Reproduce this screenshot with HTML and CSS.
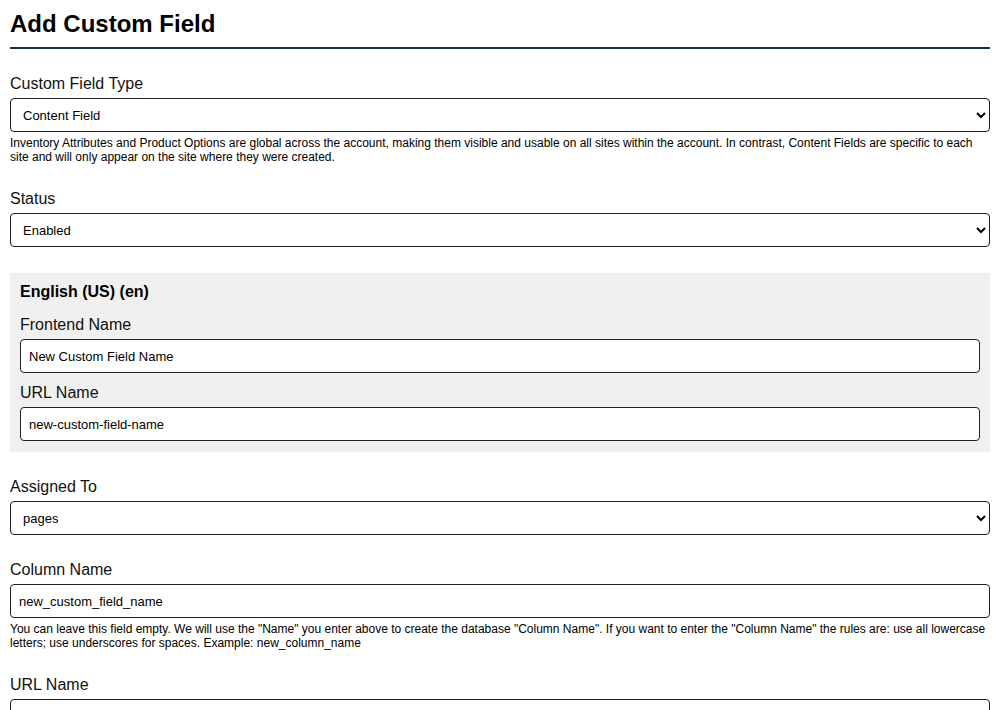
FILE: index.html
```html
<!DOCTYPE html>
<html lang="en">
<head>
<meta charset="utf-8">
<title>Add Custom Field</title>
<link rel="stylesheet" href="styles.css">
</head>
<body>
<div class="page">
  <h1 class="page-title">Add Custom Field</h1>
  <form class="form">
    <div class="group">
      <label class="label" for="type">Custom Field Type</label>
      <select class="control select" id="type">
        <option>Content Field</option>
        <option>Inventory Attribute</option>
        <option>Product Option</option>
      </select>
      <p class="help">Inventory Attributes and Product Options are global across the account, making them visible and usable on all sites within the account. In contrast, Content Fields are specific to each site and will only appear on the site where they were created.</p>
    </div>
    <div class="group">
      <label class="label" for="status">Status</label>
      <select class="control select" id="status">
        <option>Enabled</option>
        <option>Disabled</option>
      </select>
    </div>
    <div class="group lang-box">
      <div class="lang-title">English (US) (en)</div>
      <div class="inner-group">
        <label class="label" for="fname">Frontend Name</label>
        <input class="control" id="fname" type="text" value="New Custom Field Name">
      </div>
      <div class="inner-group">
        <label class="label" for="uname">URL Name</label>
        <input class="control" id="uname" type="text" value="new-custom-field-name">
      </div>
    </div>
    <div class="group">
      <label class="label" for="assigned">Assigned To</label>
      <select class="control select" id="assigned">
        <option>pages</option>
        <option>products</option>
        <option>categories</option>
      </select>
    </div>
    <div class="group">
      <label class="label" for="column">Column Name</label>
      <input class="control" id="column" type="text" value="new_custom_field_name">
      <p class="help">You can leave this field empty. We will use the "Name" you enter above to create the database "Column Name". If you want to enter the "Column Name" the rules are: use all lowercase letters; use underscores for spaces. Example: new_column_name</p>
    </div>
    <div class="group">
      <label class="label" for="url">URL Name</label>
      <input class="control" id="url" type="text" value="">
    </div>
  </form>
</div>
</body>
</html>
```
FILE: styles.css
```css
html, body {
  margin: 0;
  padding: 0;
  background: #ffffff;
}

body {
  font-family: "Liberation Sans", Arial, sans-serif;
  color: #000000;
}

.page {
  padding: 10px;
}

.page-title {
  margin: 0;
  font-size: 24px;
  line-height: 28px;
  font-weight: bold;
  color: #000000;
  padding-bottom: 9px;
  border-bottom: 2px solid #15344a;
}

.form {
  display: flex;
  flex-direction: column;
  gap: 26px;
  padding-top: 26px;
}

.group {
  display: flex;
  flex-direction: column;
}

.label {
  display: block;
  font-size: 16px;
  line-height: 18px;
  margin-bottom: 5px;
  color: #111111;
}

.control {
  box-sizing: border-box;
  width: 100%;
  height: 34px;
  margin: 0;
  padding: 0 8px;
  font-family: "Liberation Sans", Arial, sans-serif;
  font-size: 13px;
  color: #000000;
  background-color: #ffffff;
  border: 1px solid #222222;
  border-radius: 4px;
}

.help {
  margin: 4px 0 0;
  font-size: 12px;
  line-height: 14px;
  color: #000000;
}

.lang-box {
  background: #f0f0f0;
  padding: 10px 10px 11px;
  gap: 11px;
}

.lang-title {
  font-size: 16px;
  line-height: 18px;
  font-weight: bold;
  margin-bottom: 4px;
}

.inner-group {
  display: flex;
  flex-direction: column;
}
```
